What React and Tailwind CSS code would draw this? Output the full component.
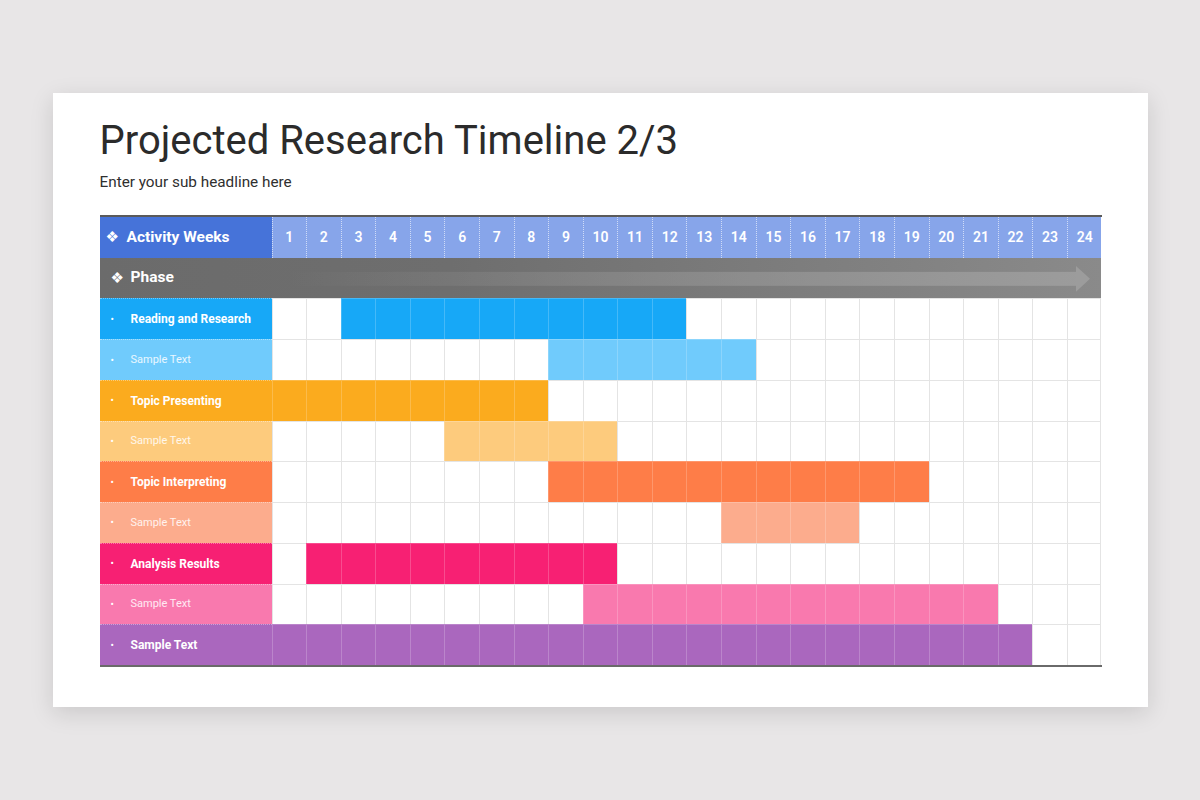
const weeks = Array.from({ length: 24 }, (_, i) => i + 1);

const rows = [
  { label: "Reading and Research", bold: true, color: "bg-[#17a8f7]", start: 3, end: 12 },
  { label: "Sample Text", bold: false, color: "bg-[#70cbfc]", start: 9, end: 14 },
  { label: "Topic Presenting", bold: true, color: "bg-[#fbab1e]", start: 1, end: 8 },
  { label: "Sample Text", bold: false, color: "bg-[#fdcb7d]", start: 6, end: 10 },
  { label: "Topic Interpreting", bold: true, color: "bg-[#fe7d48]", start: 9, end: 19 },
  { label: "Sample Text", bold: false, color: "bg-[#fcac8d]", start: 14, end: 17 },
  { label: "Analysis Results", bold: true, color: "bg-[#f72073]", start: 2, end: 10 },
  { label: "Sample Text", bold: false, color: "bg-[#f979ae]", start: 10, end: 21 },
  { label: "Sample Text", bold: true, color: "bg-[#aa67be]", start: 1, end: 22 },
];

function PhaseArrow() {
  return (
    <svg className="absolute inset-0 h-full w-full" viewBox="0 0 1002 41" preserveAspectRatio="none">
      <defs>
        <linearGradient id="band" x1="190" y1="0" x2="990" y2="0" gradientUnits="userSpaceOnUse">
          <stop offset="0" stopColor="#9a9a9a" stopOpacity="0" />
          <stop offset="0.55" stopColor="#9a9a9a" stopOpacity="0.55" />
          <stop offset="1" stopColor="#9c9c9c" stopOpacity="1" />
        </linearGradient>
      </defs>
      <rect x="190" y="14" width="787" height="14" fill="url(#band)" />
      <polygon points="976,8 990,21 976,34" fill="#9c9c9c" />
    </svg>
  );
}

function Row({ row }) {
  return (
    <>
      <div
        className={`${row.color} flex items-center border-t border-dotted border-white/40 pl-[11px] text-white`}
      >
        <span className="w-[20px] text-[10px]">•</span>
        <span className={row.bold ? "text-[12px] font-bold" : "text-[11px] text-white/85"}>
          {row.label}
        </span>
      </div>
      {weeks.map((w) => {
        const on = w >= row.start && w <= row.end;
        return (
          <div
            key={w}
            className={`border-l border-t ${w === 24 ? "border-r" : ""} ${
              on ? `${row.color} border-white/20` : "bg-white border-[#e4e4e4]"
            }`}
          />
        );
      })}
    </>
  );
}

export default function App() {
  return (
    <div
      className="flex h-screen w-full items-center justify-center bg-[#e8e6e7]"
      style={{ fontFamily: "Roboto, 'DejaVu Sans', sans-serif" }}
    >
      <div className="h-[614px] w-[1095px] bg-white px-[47px] pt-[24px] shadow-[0_6px_22px_rgba(0,0,0,0.13)]">
        <h1 className="text-[40px] leading-[48px] font-normal text-[#2b2b2b]">
          Projected Research Timeline 2/3
        </h1>
        <p className="mt-[7px] text-[15.3px] leading-[20px] text-[#2f2f2f]">Enter your sub headline here</p>

        <div className="mt-[23px] w-[1002px] border-t-2 border-b-2 border-t-[#5a5a5a] border-b-[#6a6a6a]">
          <div className="grid h-[448px] grid-cols-[172px_repeat(24,minmax(0,1fr))] grid-rows-[repeat(11,minmax(0,1fr))]">
            <div className="flex items-center bg-[#4673d9] pl-[6px] text-white">
              <span className="w-[21px] text-[15px] leading-none">❖</span>
              <span className="text-[15.5px] font-bold">Activity Weeks</span>
            </div>
            {weeks.map((w) => (
              <div
                key={w}
                className="flex items-center justify-center border-l border-dotted border-white/60 bg-[#87a5ea] text-[14px] font-semibold text-white"
              >
                {w}
              </div>
            ))}

            <div className="relative col-span-25 flex items-center bg-[linear-gradient(90deg,#6b6b6b_0%,#6e6e6e_35%,#8a8a8a_100%)] pl-[11px] text-white">
              <PhaseArrow />
              <span className="relative w-[20px] text-[15px] leading-none">❖</span>
              <span className="relative text-[15.5px] font-bold">Phase</span>
            </div>

            {rows.map((row, i) => (
              <Row key={i} row={row} />
            ))}
          </div>
        </div>
      </div>
    </div>
  );
}
